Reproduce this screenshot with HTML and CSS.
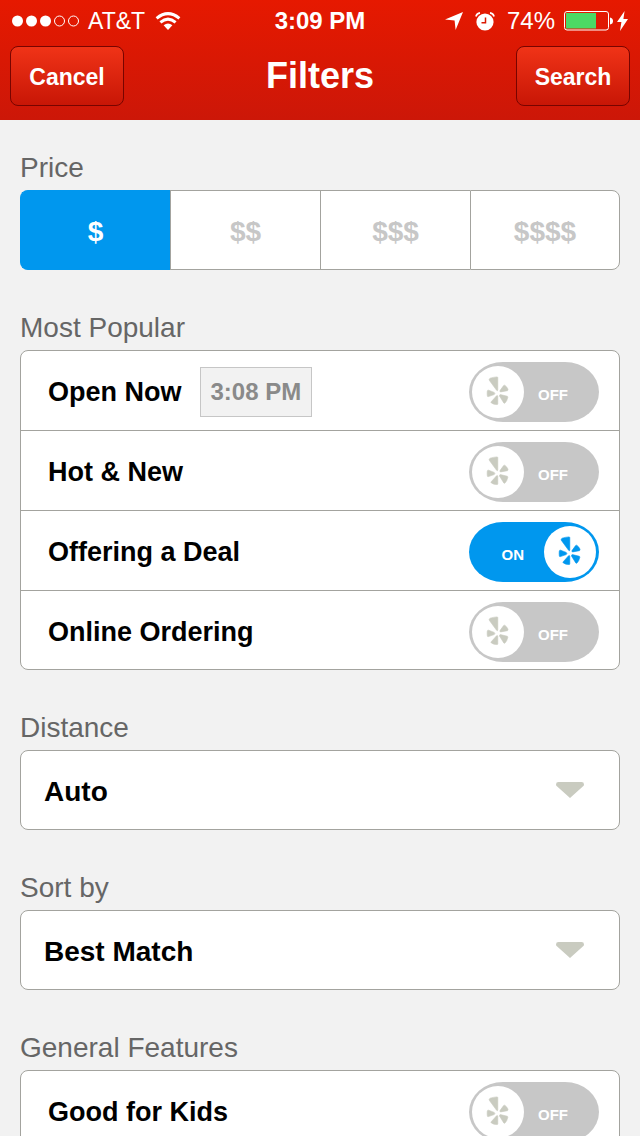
FILE: index.html
```html
<!DOCTYPE html>
<html lang="en">
<head>
<meta charset="utf-8">
<meta name="viewport" content="width=device-width, initial-scale=1">
<title>Filters</title>
<link rel="stylesheet" href="styles.css">
</head>
<body>
<svg class="sprite" aria-hidden="true">
  <symbol id="burst" viewBox="0 0 52 52">
    <path d="M17.2 13.4Q17.4 12.6 18.2 12.2Q21.5 11.1 25 10.9Q25.8 10.9 25.8 11.7V24Q25.6 25.4 24.6 24.3L17.4 14.4Z"/>
    <path d="M28 24.6L31.6 19.6Q32.2 18.8 33 19.4Q35.2 21 36 23.2Q36.2 24.4 35.4 24.7L28.8 25.9Q27.4 25.8 28 24.6Z"/>
    <path d="M28.4 28.6L35.2 30.2Q36.1 30.6 35.8 31.6Q35 35 33 37Q32.4 37.6 31.8 37L27.6 30.2Q27.2 28.6 28.4 28.6Z"/>
    <path d="M25.8 30.4V37.8Q25.8 38.7 25 38.6Q21.6 38.5 19.4 37Q18.7 36.6 19.2 35.8L24.4 29.9Q25.6 28.9 25.8 30.4Z"/>
    <path d="M22.2 28.6L16.4 30.6Q15.4 30.8 15.3 29.8Q15 27.4 15.3 25Q15.6 23.9 16.6 24.2L22.2 26.4Q23.6 27.6 22.2 28.6Z"/>
  </symbol>
  <symbol id="caret" viewBox="0 0 28 16">
    <path d="M2.5 0H25.5Q28 0 28 2.4Q28 3.6 26.8 4.5L14 16L1.2 4.5Q0 3.6 0 2.4Q0 0 2.5 0Z"/>
  </symbol>
</svg>

<div class="app">
  <header class="header">
    <div class="status">
      <div class="status-left">
        <svg class="signal" width="68" height="12" viewBox="0 0 68 12" aria-hidden="true">
          <g fill="#fff"><circle cx="5.5" cy="6" r="5.5"/><circle cx="19.5" cy="6" r="5.5"/><circle cx="33.5" cy="6" r="5.5"/></g>
          <g fill="none" stroke="#fff"><circle cx="47.5" cy="6" r="5"/><circle cx="61.5" cy="6" r="5"/></g>
        </svg>
        <span class="carrier">AT&amp;T</span>
        <svg width="26" height="18" viewBox="0 0 26 18" aria-hidden="true">
          <g fill="none" stroke="#fff" stroke-width="3"><path d="M1.6 6.3Q13 -3 24.4 6.3"/><path d="M5.4 10.3Q13 4 20.6 10.3"/></g>
          <path fill="#fff" d="M8.6 13.2Q13 9.8 17.4 13.2L13 18Z"/>
        </svg>
      </div>
      <time class="clock">3:09 PM</time>
      <div class="status-right">
        <svg width="18" height="18" viewBox="0 0 18 18" aria-hidden="true"><path fill="#fff" d="M18 0L10.6 18L9.6 8.6L0 7.6Z"/></svg>
        <svg class="alarm" width="20" height="19" viewBox="0 0 20 19" aria-hidden="true">
          <circle cx="10" cy="10" r="8.6" fill="#fff"/>
          <path d="M.9 4.4Q1.8 1.4 5 .9M15 .9Q18.2 1.4 19.1 4.4" fill="none" stroke="#fff" stroke-width="1.6"/>
          <path d="M10.5 5.5V10.7H6.5" fill="none" stroke="#dc1802" stroke-width="1.5"/>
        </svg>
        <span class="percent">74%</span>
        <svg width="49" height="20" viewBox="0 0 49 20" aria-hidden="true">
          <rect x=".5" y=".5" width="44" height="18.5" rx="2.5" fill="none" stroke="#fff"/>
          <path fill="#4cd964" d="M2 2H32V17.5H2Z"/>
          <path fill="#fff" d="M46 6.5Q49 7 49 10T46 13.5Z"/>
        </svg>
        <svg class="bolt" width="11" height="20" viewBox="0 0 11 20" aria-hidden="true"><path fill="#fff" d="M7.6 0L0 11H4.4L3 20L11 8H6.4Z"/></svg>
      </div>
    </div>
    <nav class="nav">
      <button class="nav-button" type="button">Cancel</button>
      <h1 class="title">Filters</h1>
      <button class="nav-button" type="submit" form="filters">Search</button>
    </nav>
  </header>

  <main class="content">
    <form id="filters" class="filters">
      <section class="group">
        <h2 class="group-title" id="price-title">Price</h2>
        <div class="segments" role="radiogroup" aria-labelledby="price-title">
          <label class="segment"><input type="radio" name="price" value="1" checked><span>$</span></label>
          <label class="segment"><input type="radio" name="price" value="2"><span>$$</span></label>
          <label class="segment"><input type="radio" name="price" value="3"><span>$$$</span></label>
          <label class="segment"><input type="radio" name="price" value="4"><span>$$$$</span></label>
        </div>
      </section>

      <section class="group">
        <h2 class="group-title">Most Popular</h2>
        <div class="card">
          <div class="row">
            <label class="row-label" for="open">Open Now</label>
            <button class="time-button" type="button">3:08 PM</button>
            <span class="switch"><input type="checkbox" role="switch" id="open"><span class="face"><span class="knob"><svg><use href="#burst"/></svg></span><span class="on">ON</span><span class="off">OFF</span></span></span>
          </div>
          <div class="row">
            <label class="row-label" for="hot">Hot &amp; New</label>
            <span class="switch"><input type="checkbox" role="switch" id="hot"><span class="face"><span class="knob"><svg><use href="#burst"/></svg></span><span class="on">ON</span><span class="off">OFF</span></span></span>
          </div>
          <div class="row">
            <label class="row-label" for="deal">Offering a Deal</label>
            <span class="switch"><input type="checkbox" role="switch" id="deal" checked><span class="face"><span class="knob"><svg><use href="#burst"/></svg></span><span class="on">ON</span><span class="off">OFF</span></span></span>
          </div>
          <div class="row">
            <label class="row-label" for="ordering">Online Ordering</label>
            <span class="switch"><input type="checkbox" role="switch" id="ordering"><span class="face"><span class="knob"><svg><use href="#burst"/></svg></span><span class="on">ON</span><span class="off">OFF</span></span></span>
          </div>
        </div>
      </section>

      <section class="group">
        <h2 class="group-title"><label for="distance">Distance</label></h2>
        <div class="card picker">
          <select id="distance"><option>Auto</option></select>
          <svg class="caret"><use href="#caret"/></svg>
        </div>
      </section>

      <section class="group">
        <h2 class="group-title"><label for="sort">Sort by</label></h2>
        <div class="card picker">
          <select id="sort"><option>Best Match</option></select>
          <svg class="caret"><use href="#caret"/></svg>
        </div>
      </section>

      <section class="group">
        <h2 class="group-title">General Features</h2>
        <div class="card">
          <div class="row">
            <label class="row-label" for="kids">Good for Kids</label>
            <span class="switch"><input type="checkbox" role="switch" id="kids"><span class="face"><span class="knob"><svg><use href="#burst"/></svg></span><span class="on">ON</span><span class="off">OFF</span></span></span>
          </div>
        </div>
      </section>
    </form>
  </main>
</div>
</body>
</html>
```
FILE: styles.css
```css
* {
  box-sizing: border-box;
}

body {
  margin: 0;
  background: #f2f2f2;
  color: #000;
  font-family: "Liberation Sans", Helvetica, Arial, sans-serif;
}

button,
select {
  font-family: inherit;
}

svg {
  display: block;
  flex: none;
}

.sprite {
  display: none;
}

.app {
  display: flex;
  flex-direction: column;
  height: 100vh;
}

/* Header */
.header {
  flex: none;
  color: #fff;
  background: linear-gradient(#e61900, #cc1708);
}

.status {
  display: grid;
  grid-template-columns: 1fr auto 1fr;
  align-items: center;
  height: 40px;
  padding: 2px 12px 0;
  font-size: 24px;
}

.status-left,
.status-right {
  display: flex;
  align-items: center;
}

.status-right {
  justify-content: flex-end;
}

.carrier {
  margin: 0 10px 0 8px;
  font-size: 23px;
}

.clock {
  font-weight: bold;
}

.alarm {
  margin: 0 12px;
}

.percent {
  margin-right: 9px;
}

.bolt {
  margin-left: 4px;
}

.nav {
  display: grid;
  grid-template-columns: 1fr auto 1fr;
  align-items: center;
  padding: 6px 10px 14px;
}

.nav-button {
  min-width: 114px;
  height: 60px;
  padding: 2px 16px 0;
  border: 1px solid #780400;
  border-radius: 8px;
  background: linear-gradient(#f03317, #c81606);
  color: #fff;
  font-size: 23px;
  font-weight: bold;
  justify-self: start;
}

.nav-button:last-child {
  justify-self: end;
}

.title {
  margin: 0;
  font-size: 36px;
  line-height: 40px;
}

/* Filter groups */
.content {
  flex: 1;
  min-height: 0;
  overflow-y: auto;
  scrollbar-width: none;
}

.filters {
  display: flex;
  flex-direction: column;
  gap: 42px;
  padding: 32px 20px;
}

.group-title {
  margin: 0 0 6px;
  color: #666;
  font-size: 28px;
  font-weight: normal;
  line-height: 32px;
}

.card {
  border: 1px solid #a3a39e;
  border-radius: 8px;
  background: #fff;
}

/* Price */
.segments {
  display: grid;
  grid-template-columns: repeat(4, 1fr);
}

.segment {
  position: relative;
  display: flex;
  align-items: center;
  justify-content: center;
  height: 80px;
  padding-top: 3px;
  border: 1px solid #a3a39e;
  border-right-width: 0;
  background: #fff;
  color: #c7c7c7;
  font-size: 28px;
  font-weight: bold;
}

.segment:first-child {
  border-radius: 8px 0 0 8px;
}

.segment:last-child {
  border-right-width: 1px;
  border-radius: 0 8px 8px 0;
}

.segment:has(:checked) {
  border-color: #0097ee;
  background: #0097ee;
  color: #fff;
}

.segment input {
  position: absolute;
  inset: 0;
  width: 100%;
  height: 100%;
  margin: 0;
  opacity: 0;
}

/* Switch rows */
.row {
  display: flex;
  align-items: center;
  padding: 11px 20px 8px 27px;
  border-bottom: 1px solid #a3a39e;
}

.row:last-child {
  padding-bottom: 7px;
  border-bottom: 0;
}

.row-label {
  font-size: 27px;
  font-weight: bold;
  line-height: 32px;
}

.time-button {
  height: 50px;
  margin-left: 18px;
  padding: 0 10px;
  border: 1px solid #c6c6c6;
  background: #f2f2f2;
  color: #8a8a8a;
  font-size: 24px;
  font-weight: bold;
}

.switch {
  display: grid;
  width: 130px;
  height: 60px;
  margin-left: auto;
}

.switch input,
.face {
  grid-area: 1 / 1;
}

.switch input {
  width: 100%;
  height: 100%;
  margin: 0;
  border-radius: 34px / 30px;
  background: #c7c7c7;
  appearance: none;
}

.switch input:checked {
  background: #0097ee;
}

.face {
  display: flex;
  align-items: center;
  padding: 0 3px;
  color: #fff;
  font-size: 15px;
  font-weight: bold;
  pointer-events: none;
}

.knob {
  width: 52px;
  height: 52px;
  border-radius: 50%;
  background: #fff;
}

.knob svg {
  width: 52px;
  height: 52px;
  color: #c9cbc0;
  fill: currentColor;
  stroke: currentColor;
  stroke-width: 0.6;
}

.on,
.off {
  padding: 4px 20px 0 14px;
}

.on,
:checked + .face .off {
  display: none;
}

:checked + .face {
  flex-direction: row-reverse;
}

:checked + .face .on {
  display: block;
}

:checked + .face svg {
  color: #0097ee;
}

/* Drop-downs */
.picker {
  display: grid;
  align-items: center;
}

.picker select,
.caret {
  grid-area: 1 / 1;
}

.picker select {
  width: 100%;
  height: 78px;
  padding: 2px 70px 0 23px;
  border: 0;
  border-radius: 8px;
  background: transparent;
  color: #000;
  font-size: 28px;
  font-weight: bold;
  appearance: none;
}

.caret {
  width: 28px;
  height: 16px;
  margin-right: 35px;
  justify-self: end;
  fill: #c9cbc0;
  pointer-events: none;
}
```
